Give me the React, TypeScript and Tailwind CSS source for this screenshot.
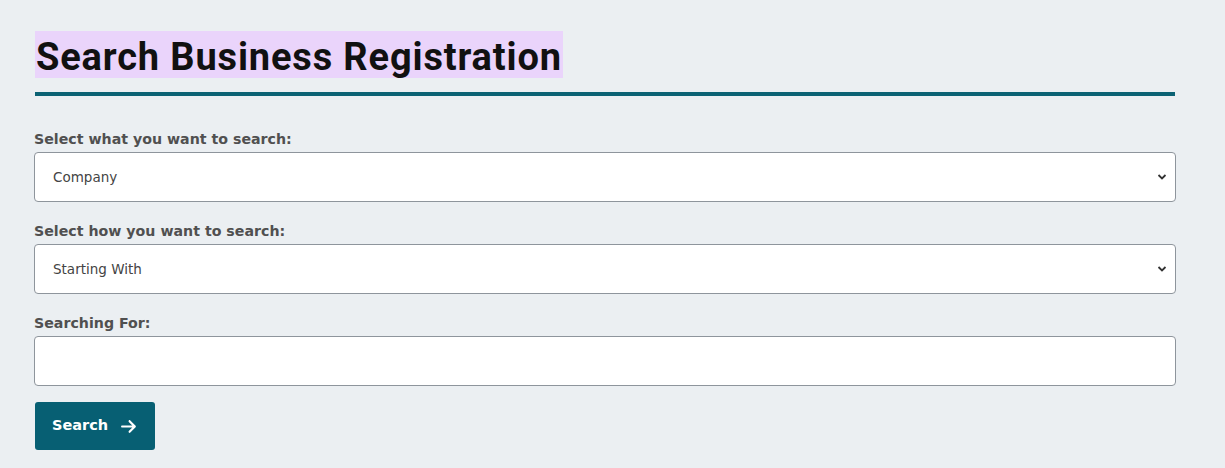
import { FaArrowRight } from 'react-icons/fa6';

const labelFont = { fontFamily: '"DejaVu Sans", sans-serif' };

function ChevronDown() {
  return (
    <svg width="10" height="7" viewBox="0 0 10 7" className="absolute right-[8px] top-1/2 -translate-y-1/2 pointer-events-none">
      <path d="M1.5 1.5 L5 5 L8.5 1.5" fill="none" stroke="#333" strokeWidth="1.8" />
    </svg>
  );
}

function SelectField({ label, value }: { label: string; value: string }) {
  return (
    <div className="flex flex-col">
      <label className="text-[14.2px] leading-[20px] font-bold text-[#505050] mb-[3px]" style={labelFont}>
        {label}
      </label>
      <div className="relative h-[50px] bg-white border border-[#8e959c] rounded-[4px] flex items-center pl-[18px]">
        <span className="text-[13.5px] text-[#444]" style={labelFont}>{value}</span>
        <ChevronDown />
      </div>
    </div>
  );
}

export default function App() {
  return (
    <div className="min-h-[468px] w-full bg-[#ebeff2] pt-[31px] pl-[34px]">
      <div className="w-[1142px]">
        <div className="pl-[1px]">
          <h1 className="inline-block bg-[#ead4fb] h-[47px] leading-[53px] text-[38px] font-bold tracking-[0.85px] text-[#111] px-[1px]" style={{ fontFamily: 'Roboto, sans-serif' }}>
            Search Business Registration
          </h1>
          <div className="h-[4px] bg-[#0b6274] mt-[14px] w-[1140px]" />
        </div>

        <div className="flex flex-col gap-[19px] mt-[33px]">
          <SelectField label="Select what you want to search:" value="Company" />
          <SelectField label="Select how you want to search:" value="Starting With" />
          <div className="flex flex-col">
            <label className="text-[14.2px] leading-[20px] font-bold text-[#505050] mb-[3px]" style={labelFont}>
              Searching For:
            </label>
            <input className="h-[50px] bg-white border border-[#8e959c] rounded-[4px] outline-none" />
          </div>
        </div>

        <button className="mt-[16px] ml-[1px] h-[48px] w-[120px] bg-[#075f73] rounded-[3px] text-white text-[14.5px] font-bold flex items-center pl-[17px] gap-[12px]" style={labelFont}>
          Search
          <FaArrowRight className="text-[17px]" />
        </button>
      </div>
    </div>
  );
}
